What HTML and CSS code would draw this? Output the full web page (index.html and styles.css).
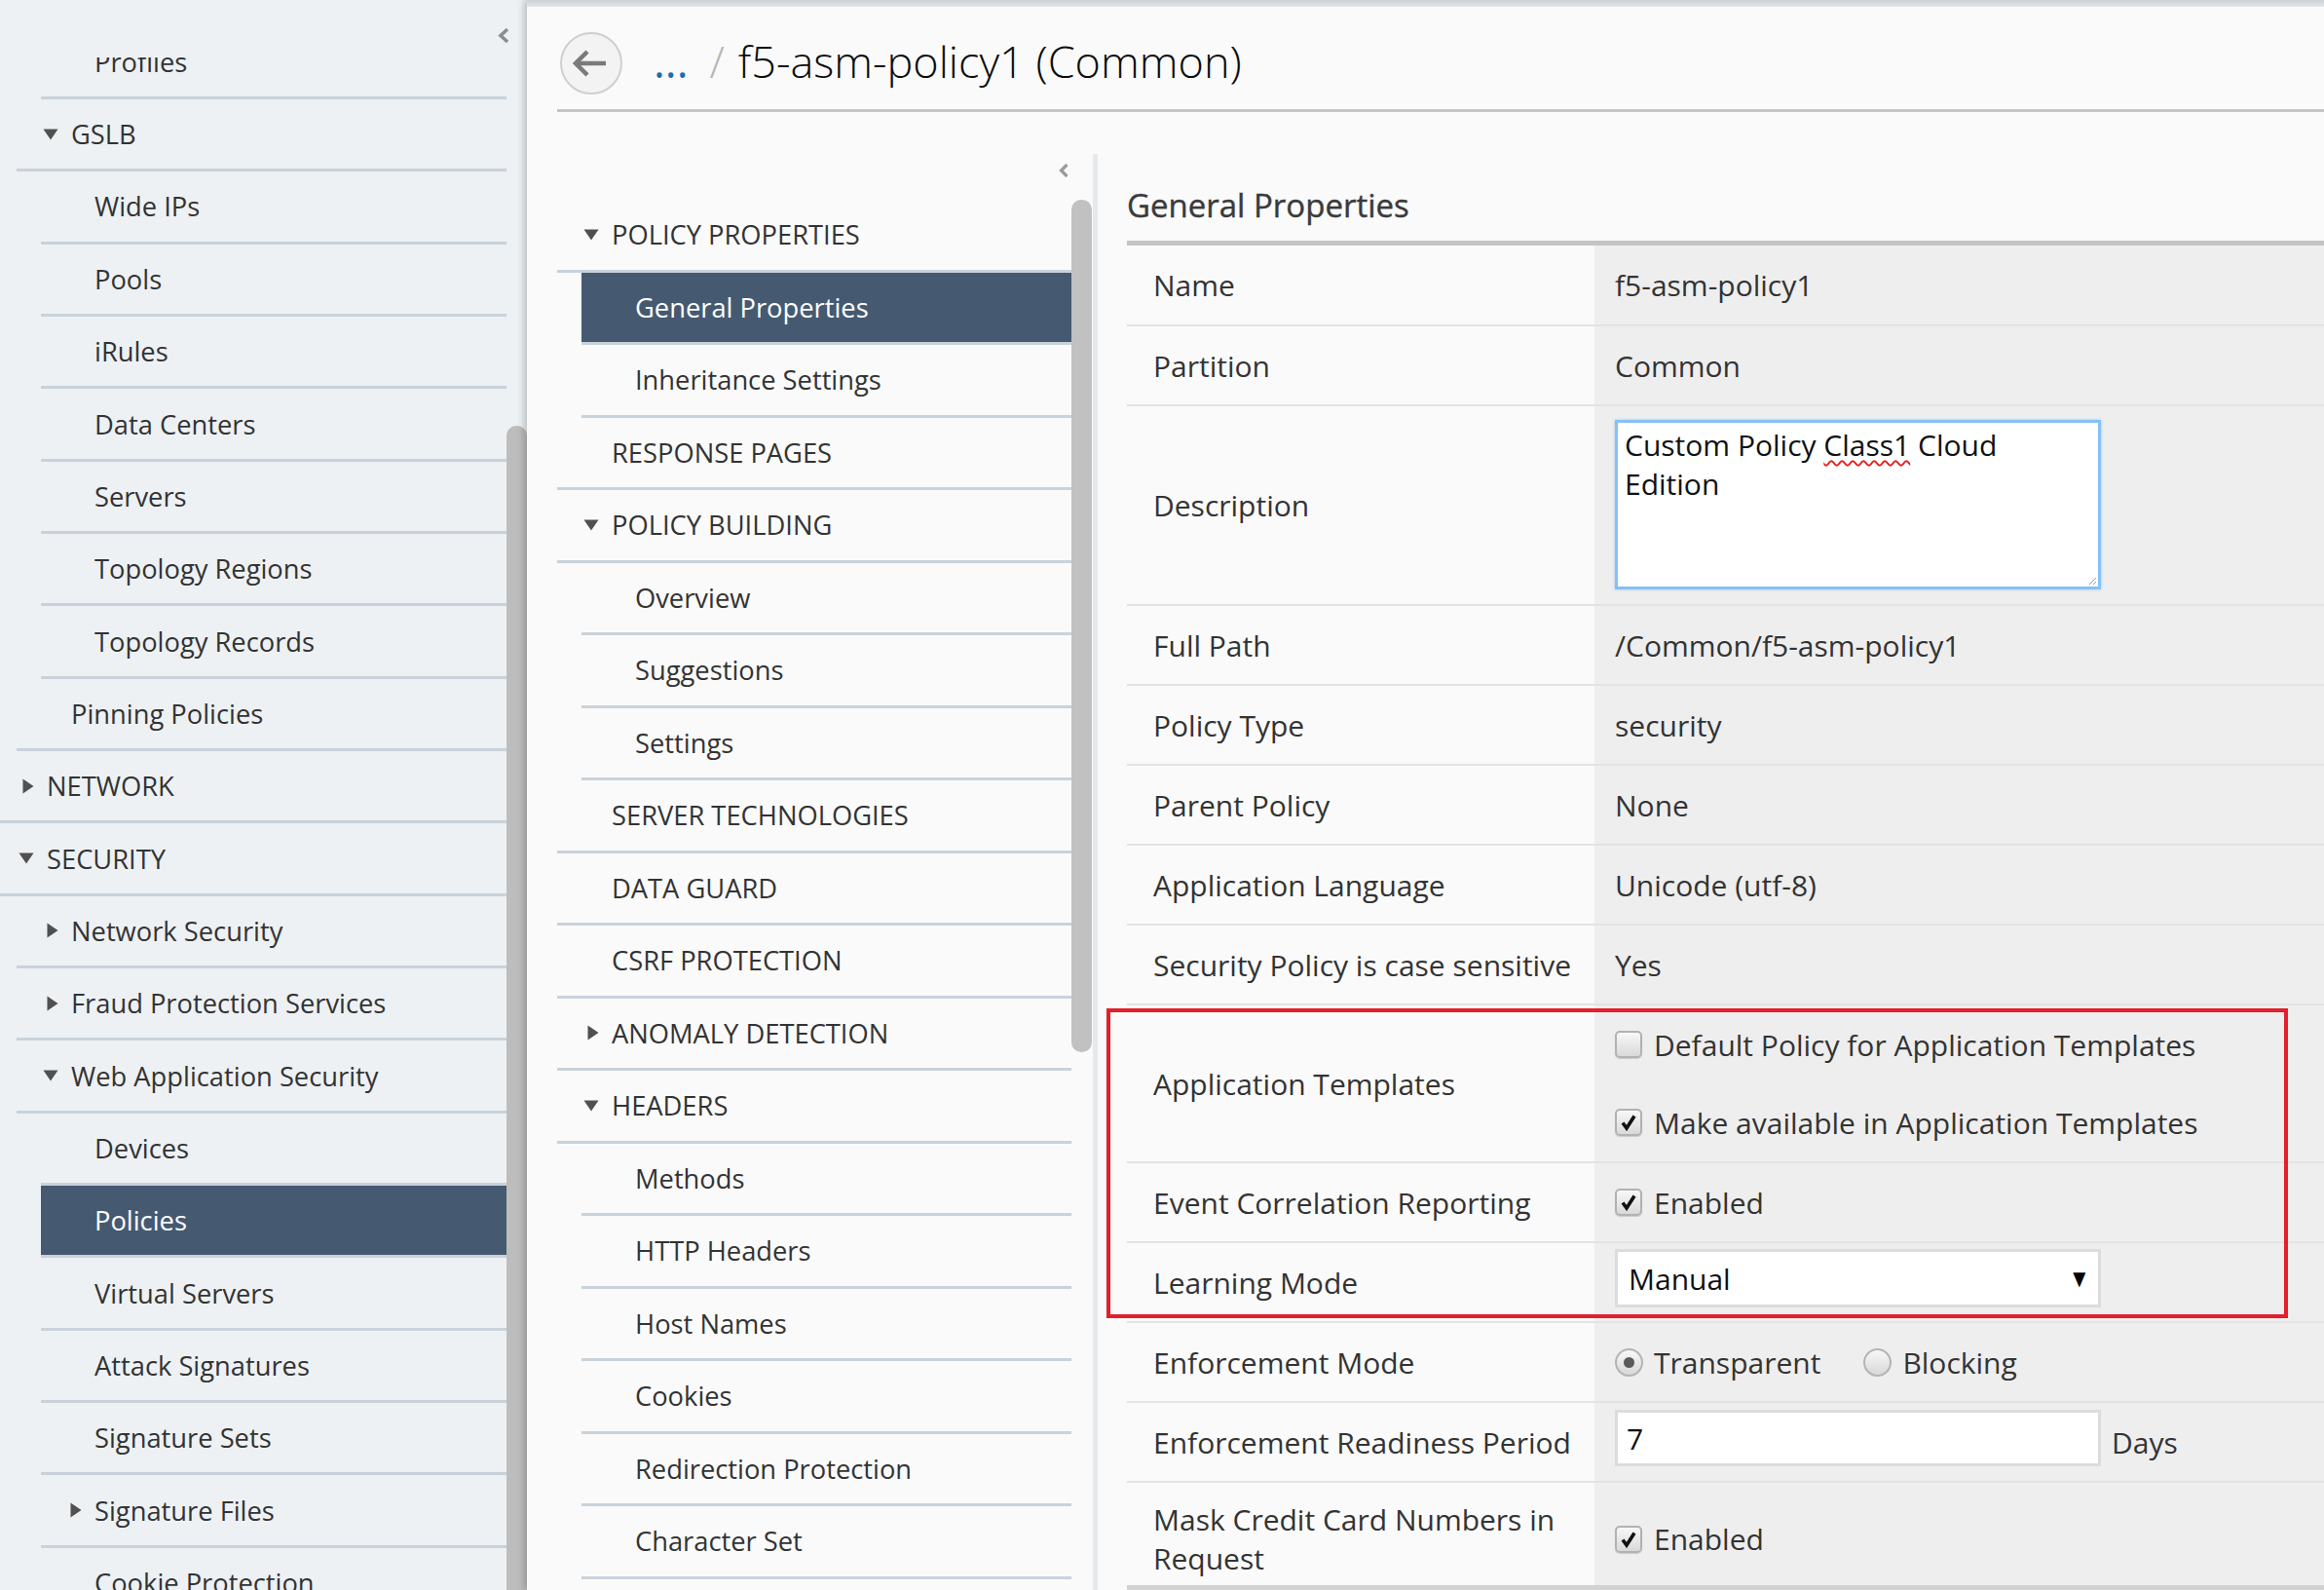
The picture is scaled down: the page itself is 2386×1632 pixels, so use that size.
FILE: index.html
```html
<!DOCTYPE html>
<html lang="en">
<head>
<meta charset="utf-8">
<title>f5-asm-policy1 (Common)</title>
<link rel="stylesheet" href="styles.css">
</head>
<body>
<div class="app">
  <aside class="sidebar">
    <div class="sidebar-top">
      <svg class="chev" width="12" height="17" viewBox="0 0 12 17"><polyline points="10,2 3,8.5 10,15"/></svg>
    </div>
    <div class="sidebar-scroll">
      <ul class="nav side-nav">
        <li class="row l3"><span class="slot"></span>Profiles</li>
        <li class="row l2"><span class="slot"><svg class="tri" width="16" height="12" viewBox="0 0 16 12"><path d="M0.5 0.5H15.5L8 11.5Z"/></svg></span>GSLB</li>
        <li class="row l3"><span class="slot"></span>Wide IPs</li>
        <li class="row l3"><span class="slot"></span>Pools</li>
        <li class="row l3"><span class="slot"></span>iRules</li>
        <li class="row l3"><span class="slot"></span>Data Centers</li>
        <li class="row l3"><span class="slot"></span>Servers</li>
        <li class="row l3"><span class="slot"></span>Topology Regions</li>
        <li class="row l3"><span class="slot"></span>Topology Records</li>
        <li class="row l2"><span class="slot"></span>Pinning Policies</li>
        <li class="row l1"><span class="slot"><svg class="tri" width="12" height="16" viewBox="0 0 12 16"><path d="M0.5 0.5V15.5L11.5 8Z"/></svg></span>NETWORK</li>
        <li class="row l1"><span class="slot"><svg class="tri" width="16" height="12" viewBox="0 0 16 12"><path d="M0.5 0.5H15.5L8 11.5Z"/></svg></span>SECURITY</li>
        <li class="row l2"><span class="slot"><svg class="tri" width="12" height="16" viewBox="0 0 12 16"><path d="M0.5 0.5V15.5L11.5 8Z"/></svg></span>Network Security</li>
        <li class="row l2"><span class="slot"><svg class="tri" width="12" height="16" viewBox="0 0 12 16"><path d="M0.5 0.5V15.5L11.5 8Z"/></svg></span>Fraud Protection Services</li>
        <li class="row l2"><span class="slot"><svg class="tri" width="16" height="12" viewBox="0 0 16 12"><path d="M0.5 0.5H15.5L8 11.5Z"/></svg></span>Web Application Security</li>
        <li class="row l3"><span class="slot"></span>Devices</li>
        <li class="row l3 sel"><span class="slot"></span>Policies</li>
        <li class="row l3"><span class="slot"></span>Virtual Servers</li>
        <li class="row l3"><span class="slot"></span>Attack Signatures</li>
        <li class="row l3"><span class="slot"></span>Signature Sets</li>
        <li class="row l3"><span class="slot"><svg class="tri" width="12" height="16" viewBox="0 0 12 16"><path d="M0.5 0.5V15.5L11.5 8Z"/></svg></span>Signature Files</li>
        <li class="row l3"><span class="slot"></span>Cookie Protection</li>
      </ul>
    </div>
  </aside>
  <div class="vscroll side-vscroll"><div class="thumb"></div></div>

  <main class="main">
    <div class="topband"></div>
    <header class="page-header">
      <div class="back">
        <svg width="36" height="28" viewBox="0 0 36 28"><path d="M3 14H34M15 2L3 14L15 26"/></svg>
      </div>
      <div class="crumbs">
        <span class="dots">...</span>
        <span class="slash">/</span>
        <span class="title">f5-asm-policy1 (Common)</span>
      </div>
    </header>

    <div class="body">
      <nav class="nav2">
        <div class="nav2-top">
          <svg class="chev small" width="10" height="16" viewBox="0 0 10 16"><polyline points="8.5,2 2.5,8 8.5,14"/></svg>
        </div>
        <ul class="nav">
          <li class="row l1"><span class="slot"><svg class="tri" width="16" height="12" viewBox="0 0 16 12"><path d="M0.5 0.5H15.5L8 11.5Z"/></svg></span>POLICY PROPERTIES</li>
          <li class="row l2 sel"><span class="slot"></span>General Properties</li>
          <li class="row l2"><span class="slot"></span>Inheritance Settings</li>
          <li class="row l1"><span class="slot"></span>RESPONSE PAGES</li>
          <li class="row l1"><span class="slot"><svg class="tri" width="16" height="12" viewBox="0 0 16 12"><path d="M0.5 0.5H15.5L8 11.5Z"/></svg></span>POLICY BUILDING</li>
          <li class="row l2"><span class="slot"></span>Overview</li>
          <li class="row l2"><span class="slot"></span>Suggestions</li>
          <li class="row l2"><span class="slot"></span>Settings</li>
          <li class="row l1"><span class="slot"></span>SERVER TECHNOLOGIES</li>
          <li class="row l1"><span class="slot"></span>DATA GUARD</li>
          <li class="row l1"><span class="slot"></span>CSRF PROTECTION</li>
          <li class="row l1"><span class="slot"><svg class="tri" width="12" height="16" viewBox="0 0 12 16"><path d="M0.5 0.5V15.5L11.5 8Z"/></svg></span>ANOMALY DETECTION</li>
          <li class="row l1"><span class="slot"><svg class="tri" width="16" height="12" viewBox="0 0 16 12"><path d="M0.5 0.5H15.5L8 11.5Z"/></svg></span>HEADERS</li>
          <li class="row l2"><span class="slot"></span>Methods</li>
          <li class="row l2"><span class="slot"></span>HTTP Headers</li>
          <li class="row l2"><span class="slot"></span>Host Names</li>
          <li class="row l2"><span class="slot"></span>Cookies</li>
          <li class="row l2"><span class="slot"></span>Redirection Protection</li>
          <li class="row l2"><span class="slot"></span>Character Set</li>
          <li class="row l2"><span class="slot"></span>Mandatory Headers</li>
        </ul>
      </nav>
      <div class="vscroll nav2-vscroll"><div class="thumb"></div></div>
      <div class="divider"></div>

      <section class="content">
        <h2 class="heading">General Properties</h2>
        <div class="props">
          <div class="prop first"><div class="lbl">Name</div><div class="val">f5-asm-policy1</div></div>
          <div class="prop"><div class="lbl">Partition</div><div class="val">Common</div></div>
          <div class="prop desc">
            <div class="lbl">Description</div>
            <div class="val">
              <div class="textarea">Custom Policy <span class="spell">Class1</span> Cloud Edition
                <svg class="grip" width="10" height="10" viewBox="0 0 10 10"><path d="M9 2L2 9M9 6L6 9"/></svg>
              </div>
            </div>
          </div>
          <div class="prop"><div class="lbl">Full Path</div><div class="val">/Common/f5-asm-policy1</div></div>
          <div class="prop"><div class="lbl">Policy Type</div><div class="val">security</div></div>
          <div class="prop"><div class="lbl">Parent Policy</div><div class="val">None</div></div>
          <div class="prop"><div class="lbl">Application Language</div><div class="val">Unicode (utf-8)</div></div>
          <div class="prop"><div class="lbl">Security Policy is case sensitive</div><div class="val">Yes</div></div>
          <div class="prop tall">
            <div class="lbl">Application Templates</div>
            <div class="val stack">
              <div class="opt"><span class="cb"></span>Default Policy for Application Templates</div>
              <div class="opt"><span class="cb"><svg width="18" height="18" viewBox="0 0 18 18"><path d="M3 9.5L7 15L15 2.5"/></svg></span>Make available in Application Templates</div>
            </div>
          </div>
          <div class="prop"><div class="lbl">Event Correlation Reporting</div><div class="val"><span class="cb"><svg width="18" height="18" viewBox="0 0 18 18"><path d="M3 9.5L7 15L15 2.5"/></svg></span>Enabled</div></div>
          <div class="prop"><div class="lbl">Learning Mode</div><div class="val"><div class="select"><span>Manual</span><span class="arrow">▼</span></div></div></div>
          <div class="prop"><div class="lbl">Enforcement Mode</div><div class="val"><span class="rb on"></span>Transparent<span class="rb second"></span>Blocking</div></div>
          <div class="prop"><div class="lbl">Enforcement Readiness Period</div><div class="val"><div class="input">7</div><span class="unit">Days</span></div></div>
          <div class="prop last"><div class="lbl two">Mask Credit Card Numbers in Request</div><div class="val"><span class="cb"><svg width="18" height="18" viewBox="0 0 18 18"><path d="M3 9.5L7 15L15 2.5"/></svg></span>Enabled</div></div>
          <div class="annot"></div>
        </div>
      </section>
    </div>
  </main>
</div>
</body>
</html>
```
FILE: styles.css
```css
* { box-sizing: border-box; margin: 0; padding: 0; }

html, body {
  width: 2386px;
  height: 1632px;
  overflow: hidden;
}

body {
  font-family: "Open Sans", "Liberation Sans", sans-serif;
  color: #333;
  background: #fafafa;
}

.app {
  display: flex;
  height: 1632px;
  background: #edf1f4;
}

/* ---------- left sidebar ---------- */
.sidebar {
  width: 520px;
  flex: none;
  display: flex;
  flex-direction: column;
  background: #edf1f4;
}

.sidebar-top {
  height: 59px;
  flex: none;
  display: flex;
  justify-content: flex-end;
  align-items: flex-start;
  padding-top: 28px;
}

.chev {
  fill: none;
  stroke: #8d8d8d;
  stroke-width: 3.6;
  margin-right: -3px;
}

.chev.small {
  margin-right: 0;
  stroke-width: 3.2;
  stroke: #9a9a9a;
}

.sidebar-scroll {
  flex: 1;
  overflow: hidden;
}

.nav { list-style: none; }

.side-nav { margin-top: -31.4px; }

.row {
  height: 74.35px;
  border-bottom: 3px solid #c9d2da;
  display: flex;
  align-items: center;
  font-size: 27.3px;
  white-space: nowrap;
  color: #333;
}

.slot {
  width: 55px;
  flex: none;
  display: flex;
  justify-content: flex-end;
  align-items: center;
  padding-right: 13px;
}

.tri { fill: #505050; display: block; }

.side-nav .l1 { margin-left: 0; }
.side-nav .l1 .slot { width: 48px; }
.side-nav .l2 { margin-left: 17px; }
.side-nav .l2 .slot { width: 56px; }
.side-nav .l3 { margin-left: 42px; }

.row.sel {
  background: #455a71;
  color: #fff;
}

/* scrollbars */
.vscroll {
  width: 21px;
  flex: none;
  display: flex;
  flex-direction: column;
}

.side-vscroll { padding-top: 437px; }

.side-vscroll .thumb {
  flex: 1;
  background: #bdbdbd;
  border-radius: 10px 10px 0 0;
}

/* ---------- main ---------- */
.main {
  flex: 1;
  min-width: 0;
  background: #fafafa;
  display: flex;
  flex-direction: column;
  box-shadow: -3px 0 7px rgba(0, 0, 0, 0.22);
}

.topband {
  height: 7px;
  flex: none;
  background: linear-gradient(#cdd0d3, #e5e7e9);
}

.page-header {
  height: 108px;
  flex: none;
  margin-left: 31px;
  padding: 11px 0 0 3px;
  border-bottom: 3px solid #c4c4c4;
  display: flex;
  align-items: center;
}

.back {
  width: 64px;
  height: 64px;
  flex: none;
  border-radius: 50%;
  border: 2px solid #cfcfcf;
  background: #f3f3f3;
  display: flex;
  align-items: center;
  justify-content: center;
}

.back svg {
  fill: none;
  stroke: #7a7a7a;
  stroke-width: 4.5;
  margin-left: -2px;
}

.crumbs {
  display: flex;
  align-items: baseline;
  font-size: 45px;
  font-weight: 300;
  margin-bottom: 5px;
  white-space: nowrap;
}

.dots {
  color: #1a6eb0;
  font-weight: 400;
  margin-left: 32px;
}

.slash {
  color: #b5b5b5;
  margin-left: 22px;
}

.title {
  color: #0d0d0d;
  margin-left: 14px;
}

.body {
  flex: 1;
  min-height: 0;
  display: flex;
  padding-top: 43px;
}

/* ---------- secondary nav ---------- */
.nav2 {
  width: 528px;
  flex: none;
  margin-left: 31px;
}

.nav2-top {
  height: 47px;
  display: flex;
  justify-content: flex-end;
  align-items: flex-start;
  padding: 9px 3px 0 0;
}

.nav2 .row { height: 74.5px; }
.nav2 .l1 .slot { width: 56px; }
.nav2 .l2 { margin-left: 25px; }

.nav2-vscroll { padding-top: 47px; }

.nav2-vscroll .thumb {
  height: 875px;
  background: #c1c1c1;
  border-radius: 10px;
}

.divider {
  width: 5px;
  flex: none;
  margin-left: 1px;
  background: #e6e9ec;
}

/* ---------- content ---------- */
.content {
  flex: 1;
  min-width: 0;
  padding-left: 30px;
}

.heading {
  margin-top: 30px;
  font-size: 33px;
  font-weight: 400;
  line-height: 46px;
  color: #3a3a3a;
  -webkit-text-stroke: 0.4px #3a3a3a;
  padding-bottom: 13px;
  border-bottom: 5px solid #c4c4c4;
  white-space: nowrap;
}

.props { position: relative; }

.prop {
  display: grid;
  grid-template-columns: 480px 1fr;
  height: 82px;
  border-bottom: 2px solid #e3e3e3;
  font-size: 30px;
}

.prop.first { height: 83px; }
.prop.desc { height: 205px; }
.prop.tall { height: 162px; }
.prop.last {
  height: 110px;
  border-bottom: 5px solid #d2d2d2;
}

.lbl {
  padding-left: 27px;
  display: flex;
  align-items: center;
  color: #333;
  white-space: nowrap;
}

.lbl.two {
  white-space: normal;
  line-height: 40px;
  padding-top: 10px;
  padding-right: 40px;
}

.val {
  background: #eeeeee;
  padding-left: 21px;
  display: flex;
  align-items: center;
  color: #333;
  white-space: nowrap;
}

.prop.last .val { padding-top: 10px; }

.prop.desc .val {
  align-items: flex-start;
  padding-top: 14px;
}

.textarea {
  position: relative;
  width: 499px;
  height: 174px;
  border: 3px solid #86c0f6;
  box-shadow: 0 0 3px rgba(110, 175, 240, 0.55);
  background: #fff;
  padding: 3px 7px;
  font-size: 30px;
  line-height: 40px;
  color: #111;
  white-space: normal;
}

.spell {
  text-decoration: underline wavy #e0201e;
  text-decoration-thickness: 1.5px;
  text-underline-offset: 4px;
}

.grip {
  position: absolute;
  right: 1px;
  bottom: 1px;
  fill: none;
  stroke: #9a9a9a;
  stroke-width: 1;
}

.val.stack {
  flex-direction: column;
  align-items: stretch;
}

.opt {
  height: 80px;
  display: flex;
  align-items: center;
}

.cb {
  width: 28px;
  height: 28px;
  flex: none;
  border: 2px solid #b2b2b2;
  border-radius: 5px;
  background: linear-gradient(#f8f8f8, #d9d9d9);
  box-shadow: 0 1px 1px rgba(0, 0, 0, 0.15);
  margin-right: 12px;
  display: flex;
  align-items: center;
  justify-content: center;
}

.cb svg {
  fill: none;
  stroke: #111;
  stroke-width: 3.6;
}

.rb {
  width: 29px;
  height: 29px;
  flex: none;
  border-radius: 50%;
  border: 2px solid #b4b4b4;
  background: linear-gradient(#f8f8f8, #d8d8d8);
  margin-right: 11px;
  display: flex;
  align-items: center;
  justify-content: center;
}

.rb.on::after {
  content: "";
  width: 11px;
  height: 11px;
  border-radius: 50%;
  background: #5a5a5a;
}

.rb.second { margin-left: 44px; }

.select {
  width: 499px;
  height: 60px;
  border: 3px solid #dcdcdc;
  background: #fff;
  display: flex;
  align-items: center;
  justify-content: space-between;
  padding: 0 12px 0 11px;
  color: #111;
  margin-bottom: 8px;
}

.arrow {
  font-family: "DejaVu Sans", sans-serif;
  font-size: 20px;
  color: #000;
  transform: scaleX(0.85);
}

.input {
  width: 499px;
  height: 58px;
  border: 3px solid #dcdcdc;
  background: #fff;
  display: flex;
  align-items: center;
  padding-left: 9px;
  color: #111;
  margin-bottom: 8px;
}

.unit { margin-left: 11px; }

.annot {
  position: absolute;
  top: 783px;
  left: -21px;
  width: 1213px;
  height: 318px;
  border: 4px solid #e41e2b;
  pointer-events: none;
}
```
